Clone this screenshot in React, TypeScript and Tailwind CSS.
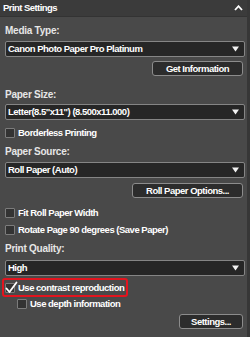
import React from 'react';

const font = { fontFamily: '"Liberation Sans", Arial, sans-serif' };

function Select({ value }: { value: string }) {
  return (
    <div className="h-[16px] w-full flex items-center justify-between pl-[2px] pr-[5px] bg-[#262626] border border-[#858585] rounded-[2px]">
      <span className="text-[9.5px] font-bold tracking-[-0.5px] text-white leading-none">{value}</span>
      <svg width="7" height="6" viewBox="0 0 7 6"><path d="M0 0.5 H7 L3.5 5.5 Z" fill="#f2f2f2" /></svg>
    </div>
  );
}

function Button({ label, w }: { label: string; w: string }) {
  return (
    <div className="flex justify-end pr-[2px]">
      <div className={`${w} h-[15px] flex items-center justify-center bg-[#2c2c2c] border border-[#8c8c8c] rounded-[3px] text-[9.5px] font-bold tracking-[-0.5px] text-white leading-none`}>
        {label}
      </div>
    </div>
  );
}

function Check({ label, checked = false }: { label: string; checked?: boolean }) {
  return (
    <div className="h-[12px] flex items-center gap-[3px]">
      <div className="relative w-[10px] h-[10px] bg-[#333333] border border-[#7c7c7c] rounded-[1px]">
        {checked && (
          <svg className="absolute -left-[1px] -top-[3px]" width="13" height="13" viewBox="0 0 13 13">
            <path d="M1.5 7.5 L4.5 11 L11.5 1.5" stroke="#ffffff" strokeWidth="1.8" fill="none" strokeLinecap="round" strokeLinejoin="round" />
          </svg>
        )}
      </div>
      <span className="text-[9.5px] font-bold tracking-[-0.5px] text-white leading-none">{label}</span>
    </div>
  );
}

function Label({ text }: { text: string }) {
  return <div className="h-[14px] flex items-center text-[10px] font-bold tracking-[-0.25px] text-[#e6e6e6] leading-none">{text}</div>;
}

export default function App() {
  return (
    <div className="w-[250px] h-[337px] flex bg-[#494949] overflow-hidden" style={font}>
      <div className="w-[247px] flex flex-col">
        <div className="h-[17px] flex items-center justify-between pl-[3px] pr-[4px] bg-[#3b3b3b] border-b border-[#333333]">
          <span className="text-[9.5px] font-bold tracking-[-0.55px] text-white leading-none">Print Settings</span>
          <svg width="9" height="6" viewBox="0 0 9 6"><path d="M1 5 L4.5 1.2 L8 5" stroke="#ffffff" strokeWidth="1.8" fill="none" /></svg>
        </div>
        <div className="flex flex-col pl-[5px] pr-[2px]">
          <div className="mt-[7px]"><Label text="Media Type:" /></div>
          <div className="mt-[3px]"><Select value="Canon Photo Paper Pro Platinum" /></div>
          <div className="mt-[4px]"><Button label="Get Information" w="w-[91px]" /></div>
          <div className="mt-[12px]"><Label text="Paper Size:" /></div>
          <div className="mt-[2px]"><Select value={'Letter(8.5"x11") (8.500x11.000)'} /></div>
          <div className="mt-[7px]"><Check label="Borderless Printing" /></div>
          <div className="mt-[6px]"><Label text="Paper Source:" /></div>
          <div className="mt-[3px]"><Select value="Roll Paper (Auto)" /></div>
          <div className="mt-[5px]"><Button label="Roll Paper Options..." w="w-[111px]" /></div>
          <div className="mt-[9px]"><Check label="Fit Roll Paper Width" /></div>
          <div className="mt-[5px]"><Check label="Rotate Page 90 degrees (Save Paper)" /></div>
          <div className="mt-[6px]"><Label text="Print Quality:" /></div>
          <div className="mt-[4px]"><Select value="High" /></div>
          <div className="mt-[2px] -ml-[3px] w-[126px] h-[19px] flex items-center pl-[1px] border-2 border-[#e3141e] rounded-[3px]">
            <Check label="Use contrast reproduction" checked />
          </div>
          <div className="mt-[1px] ml-[12px]"><Check label="Use depth information" /></div>
          <div className="mt-[4px]"><Button label="Settings..." w="w-[64px]" /></div>
        </div>
      </div>
      <div className="w-[3px] bg-[#373737]" />
    </div>
  );
}
